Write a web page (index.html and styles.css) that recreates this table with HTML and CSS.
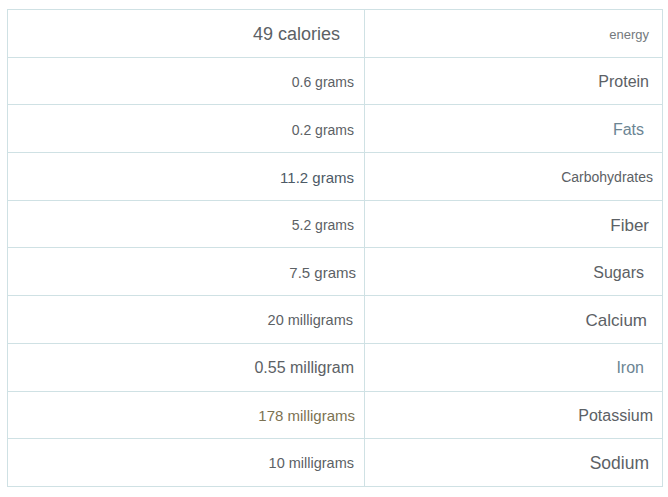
FILE: index.html
```html
<!DOCTYPE html>
<html>
<head>
<meta charset="utf-8">
<link rel="stylesheet" href="styles.css">
</head>
<body>
<div class="page">
<table class="facts">
<colgroup><col class="c1"><col class="c2"></colgroup>
<tr><td class="val s18 pad24">49 calories</td><td class="name s13 muted pr13">energy</td></tr>
<tr><td class="val s14">0.6 grams</td><td class="name s16 pr13">Protein</td></tr>
<tr><td class="val s14">0.2 grams</td><td class="name s16 blue pr18">Fats</td></tr>
<tr><td class="val s15 dark">11.2 grams</td><td class="name s14 pr9">Carbohydrates</td></tr>
<tr><td class="val s14">5.2 grams</td><td class="name s17 pr13">Fiber</td></tr>
<tr><td class="val s15 pr8">7.5 grams</td><td class="name s16 pr18">Sugars</td></tr>
<tr><td class="val s145 pr11">20 milligrams</td><td class="name s17 pr15">Calcium</td></tr>
<tr><td class="val s16">0.55 milligram</td><td class="name s16 blue pr18">Iron</td></tr>
<tr><td class="val s15 olive pr9">178 milligrams</td><td class="name s16 pr9">Potassium</td></tr>
<tr><td class="val s145">10 milligrams</td><td class="name s175 pr13">Sodium</td></tr>
</table>
</div>
</body>
</html>
```
FILE: styles.css
```css
html, body {
  margin: 0;
  background: #ffffff;
}
.page {
  padding: 9px 7px;
}
.facts {
  border-collapse: collapse;
  table-layout: fixed;
  width: 655px;
  font-family: "Liberation Sans", Arial, sans-serif;
  color: #5c6165;
}
.c1 { width: 357px; }
.c2 { width: 298px; }
.facts td {
  border: 1px solid #cfe1e4;
  height: 44.7px;
  padding: 2px 10px 0 0;
  text-align: right;
  vertical-align: middle;
  line-height: 1;
  white-space: nowrap;
}
.name { color: #5c6165; }
.s13 { font-size: 13px; }
.s14 { font-size: 14px; }
.s145 { font-size: 14.5px; }
.s15 { font-size: 15px; }
.s16 { font-size: 16px; }
.s17 { font-size: 17px; }
.s175 { font-size: 17.5px; }
.s18 { font-size: 18px; }
.facts td.pad24 { padding-right: 24px; }
.facts td.pr8 { padding-right: 8px; }
.facts td.pr9 { padding-right: 9px; }
.facts td.pr11 { padding-right: 11px; }
.facts td.pr13 { padding-right: 13px; }
.facts td.pr15 { padding-right: 15px; }
.facts td.pr18 { padding-right: 18px; }
.muted { color: #74797d; }
.blue { color: #6c8593; }
.dark { color: #4d5a66; }
.olive { color: #7c7252; }
```
